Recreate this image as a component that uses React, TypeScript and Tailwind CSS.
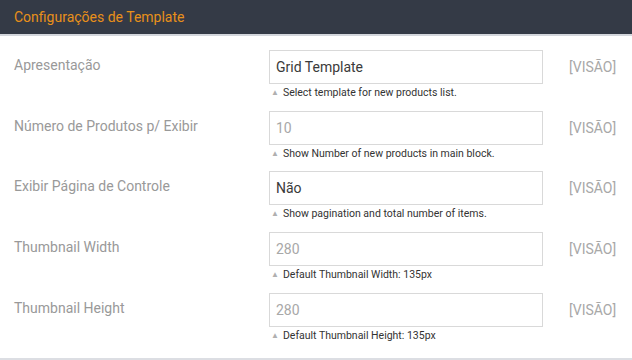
import React from 'react';

interface Field {
  label: string;
  value: string;
  filled: boolean;
  hint: string;
  rowClass: string;
}

const fields: Field[] = [
  { label: 'Apresentação', value: 'Grid Template', filled: true, hint: 'Select template for new products list.', rowClass: 'h-[61px]' },
  { label: 'Número de Produtos p/ Exibir', value: '10', filled: false, hint: 'Show Number of new products in main block.', rowClass: 'h-[60px]' },
  { label: 'Exibir Página de Controle', value: 'Não', filled: true, hint: 'Show pagination and total number of items.', rowClass: 'h-[61px]' },
  { label: 'Thumbnail Width', value: '280', filled: false, hint: 'Default Thumbnail Width: 135px', rowClass: 'h-[61px]' },
  { label: 'Thumbnail Height', value: '280', filled: false, hint: 'Default Thumbnail Height: 135px', rowClass: 'h-[61px]' },
];

const App: React.FC = () => {
  return (
    <div className="w-[632px] h-[360px] bg-white flex flex-col font-['Roboto',sans-serif]">
      {/* Header */}
      <div className="h-[34px] bg-[#343a46] flex items-center px-[14px] border-b-2 border-[#d3d6dc] box-content">
        <span className="text-[14px] text-[#e8901a]">Configurações de Template</span>
      </div>

      {/* Fields */}
      <div className="flex-1 flex flex-col pt-[14px]">
        {fields.map((f) => (
          <div key={f.label} className={`flex ${f.rowClass}`}>
            <div className="w-[269px] pl-[14px] pt-[5px] text-[14px] text-[#999]">{f.label}</div>
            <div className="w-[274px] flex flex-col">
              <div
                className={`h-[34px] border border-[#d9d9d9] px-[6px] flex items-center text-[14px] ${
                  f.filled ? 'text-[#3a3a3a]' : 'text-[#a8a8a8]'
                }`}
              >
                {f.value}
              </div>
              <div className="flex items-center gap-[4px] pl-[2px] pt-[1px] text-[10.5px] text-[#333]">
                <span className="text-[8px] text-[#b0b0b0] leading-none">▲</span>
                <span>{f.hint}</span>
              </div>
            </div>
            <div className="pl-[26px] h-[34px] flex items-center text-[14px] text-[#a8a8a8]">[VISÃO]</div>
          </div>
        ))}
      </div>

      <div className="h-[2px] bg-[#dcdee3]" />
    </div>
  );
};

export default App;
